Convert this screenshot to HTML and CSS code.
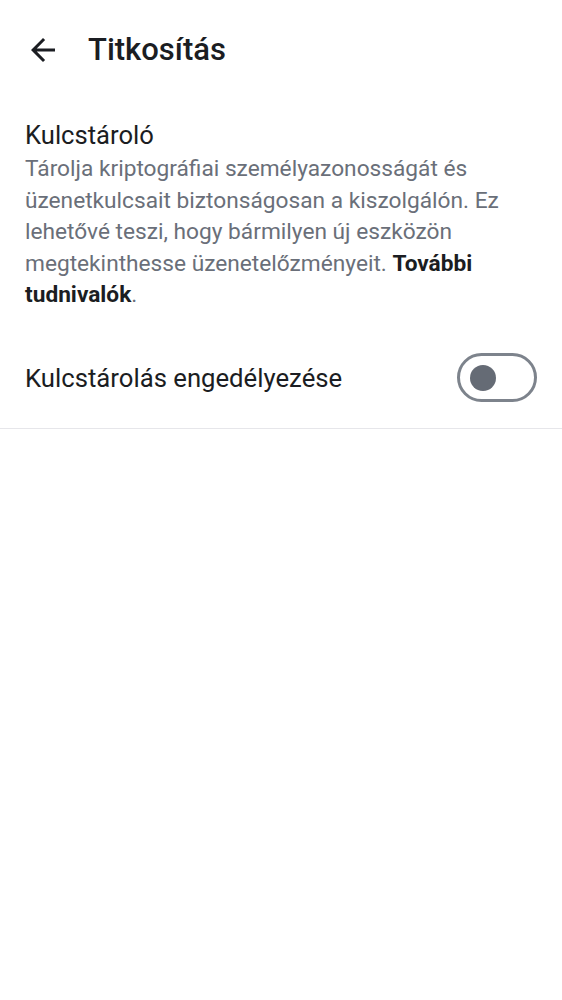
FILE: index.html
```html
<!DOCTYPE html>
<html lang="hu">
<head>
<meta charset="utf-8">
<link rel="stylesheet" href="styles.css">
</head>
<body>
<header class="topbar">
  <span class="back">
    <svg width="36" height="36" viewBox="0 0 24 24"><path fill="#1b1d22" d="M20 11H7.83l5.59-5.59L12 4l-8 8 8 8 1.41-1.41L7.83 13H20v-2z"/></svg>
  </span>
  <h1 class="title">Titkosítás</h1>
</header>
<section class="section">
  <h2 class="heading">Kulcstároló</h2>
  <p class="desc">Tárolja kriptográfiai személyazonosságát és üzenetkulcsait biztonságosan a kiszolgálón. Ez lehetővé teszi, hogy bármilyen új eszközön megtekinthesse üzenetelőzményeit. <b class="link">További tudnivalók</b>.</p>
</section>
<div class="row">
  <span class="label">Kulcstárolás engedélyezése</span>
  <span class="toggle"><span class="knob"></span></span>
</div>
</body>
</html>
```

FILE: styles.css
```css
html, body {
  margin: 0;
  padding: 0;
  background: #ffffff;
  font-family: Roboto, "Noto Sans", sans-serif;
  color: #1b1d22;
}
.topbar {
  display: flex;
  align-items: center;
  height: 100px;
  padding: 0 0 0 25px;
  box-sizing: border-box;
}
.back {
  display: flex;
  width: 36px;
  height: 36px;
}
.title {
  margin: 0 0 0 27px;
  font-size: 31px;
  font-weight: 500;
  line-height: 36px;
}
.section {
  padding: 20px 25px 0 25px;
}
.heading {
  margin: 0;
  font-size: 25.6px;
  font-weight: 400;
  line-height: 30px;
}
.desc {
  margin: 3px 0 0 0;
  font-size: 22.7px;
  line-height: 31.5px;
  color: #6a6f79;
}
.link {
  font-weight: 700;
  color: #1b1d22;
}
.row {
  display: flex;
  align-items: center;
  justify-content: space-between;
  padding: 0 25px 0 25px;
  height: 100px;
  margin-top: 17px;
  border-bottom: 1px solid #e6e6ea;
}
.label {
  font-size: 25.7px;
}
.toggle {
  display: flex;
  align-items: center;
  box-sizing: border-box;
  width: 80px;
  height: 49px;
  border: 3px solid #7d838c;
  border-radius: 25px;
  padding-left: 10px;
}
.knob {
  width: 26px;
  height: 26px;
  border-radius: 50%;
  background: #656b75;
}
```
